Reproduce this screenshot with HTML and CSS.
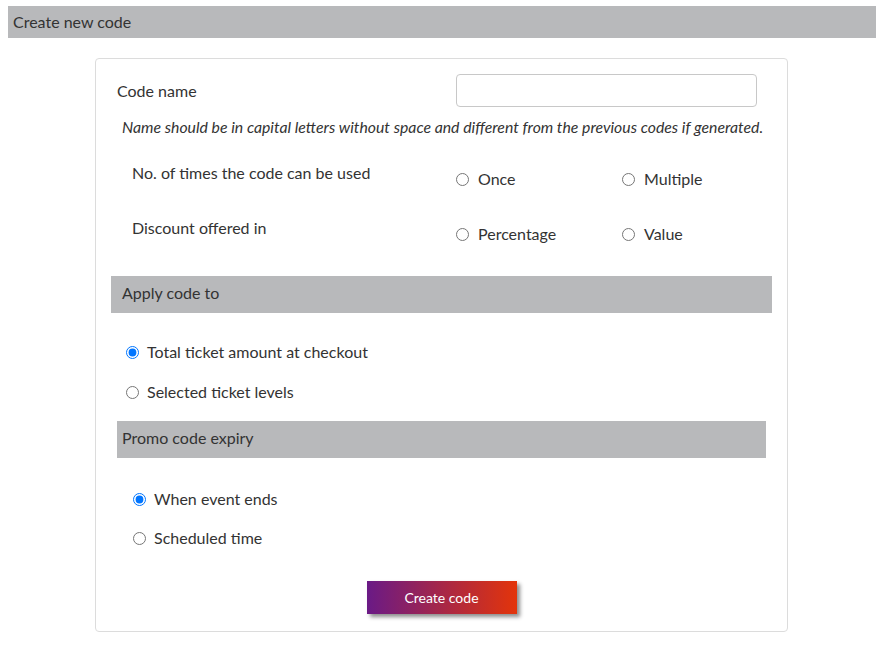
FILE: index.html
```html
<!DOCTYPE html>
<html>
<head>
<meta charset="utf-8">
<link rel="stylesheet" href="styles.css">
</head>
<body>
<div class="page-title">Create new code</div>
<div class="card">
  <div class="row-name">
    <label class="lbl" for="code">Code name</label>
    <input id="code" class="text-input" type="text">
  </div>
  <p class="hint">Name should be in capital letters without space and different from the previous codes if generated.</p>

  <div class="row-opt">
    <div class="lbl">No. of times the code can be used</div>
    <label class="opt"><input type="radio" name="times"><span>Once</span></label>
    <label class="opt"><input type="radio" name="times"><span>Multiple</span></label>
  </div>
  <div class="row-opt second">
    <div class="lbl">Discount offered in</div>
    <label class="opt"><input type="radio" name="disc"><span>Percentage</span></label>
    <label class="opt"><input type="radio" name="disc"><span>Value</span></label>
  </div>

  <div class="section-bar apply">Apply code to</div>
  <div class="radio-list apply-list">
    <label class="opt"><input type="radio" name="apply" checked><span>Total ticket amount at checkout</span></label>
    <label class="opt"><input type="radio" name="apply"><span>Selected ticket levels</span></label>
  </div>

  <div class="section-bar expiry">Promo code expiry</div>
  <div class="radio-list expiry-list">
    <label class="opt"><input type="radio" name="exp" checked><span>When event ends</span></label>
    <label class="opt"><input type="radio" name="exp"><span>Scheduled time</span></label>
  </div>

  <div class="actions">
    <button class="btn">Create code</button>
  </div>
</div>
</body>
</html>
```

FILE: styles.css
```css
* { box-sizing: border-box; }
body {
  margin: 0;
  padding: 6px 8px 0 8px;
  background: #fff;
  font-family: Lato, "Open Sans", sans-serif;
  color: #333;
  font-size: 16px;
}
.page-title {
  background: #b8b9bb;
  height: 32px;
  line-height: 32px;
  padding-left: 5px;
  font-size: 16px;
  color: #333;
}
.card {
  width: 693px;
  margin: 20px 0 0 87px;
  border: 1px solid #dcdcdc;
  border-radius: 4px;
  padding: 15px 0 17px 0;
}
.row-name {
  display: grid;
  grid-template-columns: 339px 301px;
  align-items: center;
  padding-left: 21px;
}
.lbl { line-height: 20px; }
.text-input {
  height: 33px;
  border: 1px solid #c8c8c8;
  border-radius: 4px;
  font: inherit;
  padding: 0 8px;
}
.hint {
  margin: 10px 0 0 26px;
  font-style: italic;
  font-size: 15.8px;
  line-height: 20px;
}
.row-opt {
  display: grid;
  grid-template-columns: 324px 166px auto;
  padding-left: 36px;
  margin-top: 26px;
  align-items: start;
}
.row-opt.second { margin-top: 29px; }
.row-opt .opt { margin-top: 6px; }
.opt {
  display: flex;
  align-items: center;
  line-height: 20px;
}
.opt input {
  margin: 0;
  width: 13px;
  height: 13px;
}
.opt span { margin-left: 9px; }
.section-bar {
  background: #b8b9bb;
  height: 37px;
  line-height: 34px;
  padding-left: 11px;
}
.section-bar.apply { margin: 32px 15px 0 15px; }
.section-bar.expiry { margin: 0 21px 0 21px; padding-left: 5px; }
.radio-list {
  display: flex;
  flex-direction: column;
}
.apply-list { padding: 29px 0 0 30px; gap: 20px; height: 108px; }
.apply-list .opt span { margin-left: 8px; }
.expiry-list { padding: 31px 0 0 37px; gap: 19px; height: 123px; }
.expiry-list .opt span { margin-left: 8px; }
.actions {
  display: flex;
  justify-content: center;
}
.btn {
  width: 150px;
  height: 33px;
  border: none;
  background: linear-gradient(to right, #6a1a86, #e3340a);
  color: #fff;
  font-family: Lato, sans-serif;
  font-size: 14px;
  box-shadow: 3px 3px 4px rgba(0,0,0,0.45);
}
```
